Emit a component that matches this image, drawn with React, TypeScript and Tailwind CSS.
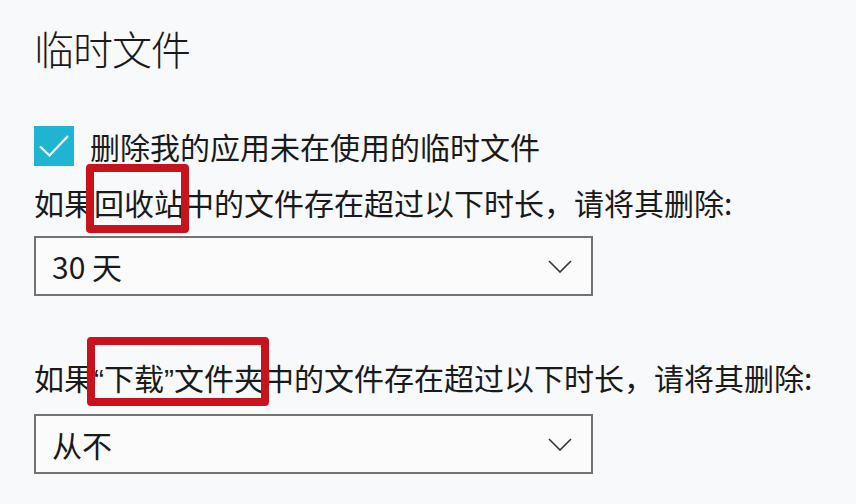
import React from 'react';

const font = { fontFamily: '"Noto Sans CJK SC", "Noto Sans", sans-serif' };

function Chevron() {
  return (
    <svg width="24" height="13" viewBox="0 0 24 13" fill="none" className="text-[#333]">
      <path d="M1 1l11 11L23 1" stroke="currentColor" strokeWidth="1.6" />
    </svg>
  );
}

function Dropdown({ value }: { value: string }) {
  return (
    <div className="mt-[14px] flex h-[60px] w-[559px] items-center justify-between border-2 border-[#737373] bg-[#fbfbfc] pl-[16px] pr-[19px]">
      <span className="text-[30px] leading-none text-[#1a1a1a]">{value}</span>
      <Chevron />
    </div>
  );
}

// narrow latin quote marks, as the system UI font draws them
function Q({ children }: { children: string }) {
  return <span className="font-['Liberation_Sans',sans-serif]">{children}</span>;
}

export default function App() {
  return (
    <div
      className="h-[504px] w-[856px] overflow-hidden bg-[#f8f9fa] pl-[34px] pt-[24px] text-[#1a1a1a]"
      style={font}
    >
      <h1 className="text-[40px] font-light leading-[48px] tracking-[-1px]">临时文件</h1>

      <div className="mt-[54px] flex h-[40px] items-center gap-[16px]">
        <div className="flex h-[40px] w-[40px] items-center justify-center bg-[#1fb4d2]">
          <svg width="34" height="26" viewBox="0 0 34 26" fill="none">
            <path d="M3 13.5l9.5 9L31 3" stroke="white" strokeWidth="2.2" />
          </svg>
        </div>
        <span className="text-[30px] leading-[40px]">删除我的应用未在使用的临时文件</span>
      </div>

      <div className="relative mt-[16px] text-[30px] leading-[40px]">
        如果回收站中的文件存在超过以下时长，请将其删除:
        <div className="absolute left-[52px] top-[-18px] h-[69px] w-[103px] rounded-[4px] border-[8px] border-[#c8121c]" />
      </div>
      <Dropdown value="30 天" />

      <div className="relative mt-[61px] text-[30px] leading-[40px]">
        如果<Q>“</Q>下载<Q>”</Q>文件夹中的文件存在超过以下时长，请将其删除:
        <div className="absolute left-[53px] top-[-20px] h-[69px] w-[182px] rounded-[4px] border-[8px] border-[#c8121c]" />
      </div>
      <Dropdown value="从不" />
    </div>
  );
}
